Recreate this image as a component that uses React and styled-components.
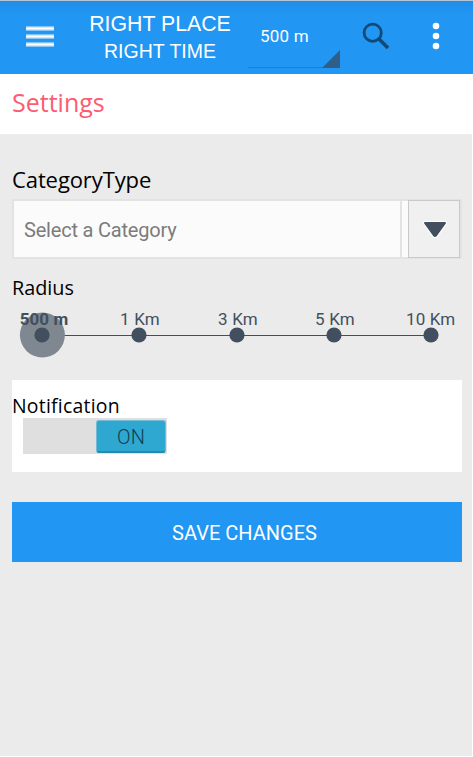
import React from 'react';
import styled, { createGlobalStyle } from 'styled-components';

const GlobalStyle = createGlobalStyle`
  * { box-sizing: border-box; }
  body { margin: 0; background: #fff; }
`;

const Screen = styled.div`
  width: 473px;
  height: 757px;
  background: #fff;
  font-family: Roboto, sans-serif;
  overflow: hidden;
`;

const Header = styled.header`
  display: flex;
  align-items: flex-start;
  height: 74px;
  border-top: 1px solid #b4c5d6;
  background: linear-gradient(#208dea 0, #2196f3 14px);
`;

const MenuIcon = styled.svg`
  flex: none;
  width: 28px;
  height: 22px;
  margin: 25px 0 0 26px;
`;

const Brand = styled.div`
  flex: none;
  width: 142px;
  margin: 10px 0 0 35px;
  color: #fff;
  font-family: 'Liberation Sans', sans-serif;
  text-align: center;
  white-space: nowrap;
`;

const BrandLine = styled.div`
  font-size: ${(p) => p.$size}px;
  line-height: 27px;
`;

const Spinner = styled.div`
  display: flex;
  justify-content: space-between;
  align-items: flex-end;
  flex: none;
  width: 92px;
  height: 50px;
  margin: 17px 0 0 17px;
  border-bottom: 1px solid #2080cc;
`;

const SpinnerValue = styled.span`
  padding-left: 12px;
  color: #fff;
  font-size: 17px;
  line-height: 20px;
  letter-spacing: 0.2px;
  white-space: nowrap;
  align-self: flex-start;
  margin-top: 8px;
`;

const Corner = styled.svg`
  width: 18px;
  height: 18px;
  flex: none;
  margin-bottom: -1px;
`;

const SearchIcon = styled.svg`
  flex: none;
  width: 28px;
  height: 28px;
  margin: 21px 0 0 22px;
`;

const MoreIcon = styled.svg`
  flex: none;
  width: 8px;
  height: 28px;
  margin: 21px 0 0 42px;
`;

const TitleBar = styled.h1`
  height: 60px;
  margin: 0;
  padding-left: 12px;
  color: #fb5c72;
  font: 400 25px/57px 'Open Sans', sans-serif;
`;

const Content = styled.main`
  width: 472px;
  height: 622px;
  padding: 30px 10px 0 12px;
  background: #ebebeb;
`;

const Label = styled.div`
  height: ${(p) => p.$height}px;
  padding-top: ${(p) => p.$top || 0}px;
  color: #000;
  font-family: 'Open Sans', sans-serif;
  font-size: ${(p) => p.$size}px;
  line-height: ${(p) => p.$line || 30}px;
  letter-spacing: ${(p) => p.$spacing || 0}px;
`;

const Select = styled.div`
  display: flex;
  width: 450px;
  height: 60px;
  margin-top: 5px;
  border: 2px solid #e3e3e3;
  background: #fbfbfb;
`;

const SelectText = styled.div`
  width: 388px;
  padding-left: 10px;
  border-right: 2px solid #e3e3e3;
  color: #7c7c7c;
  font-size: 20px;
  line-height: 59px;
  letter-spacing: -0.2px;
`;

const SelectButton = styled.div`
  display: flex;
  justify-content: center;
  align-items: center;
  width: 52px;
  height: 58px;
  margin: -1px 0 0 6px;
  border: 1px solid #c9c9c9;
  background: #f0f0f0;
`;

const Arrow = styled.svg`
  width: 26px;
  height: 20px;
  margin: 1px 0 0 2px;
`;

const Slider = styled.div`
  position: relative;
  height: 60px;
  padding: 9px 0 0 8px;
  color: #424f5e;
`;

const Ticks = styled.div`
  display: grid;
  position: relative;
  grid-template-columns: 101px 98px 97px 94px 50px;
  margin-left: -19px;
  width: 440px;
`;

const Tick = styled.span`
  width: ${(p) => p.$width || 76}px;
  padding-left: ${(p) => p.$inset || 0}px;
  font-size: 17px;
  font-weight: ${(p) => (p.$active ? 700 : 400)};
  line-height: 20px;
  letter-spacing: ${(p) => (p.$active || p.$inset ? 0.1 : 0.2)}px;
  text-align: ${(p) => (p.$inset ? 'left' : 'center')};
  white-space: nowrap;
`;

const Track = styled.svg`
  position: absolute;
  left: 0;
  top: 0;
  width: 450px;
  height: 60px;
`;

const Card = styled.section`
  width: 450px;
  height: 92px;
  margin-top: 20px;
  padding-top: 12px;
  background: #fff;
`;

const Toggle = styled.div`
  display: flex;
  justify-content: flex-end;
  width: 144px;
  height: 36px;
  margin: -1px 0 0 11px;
  padding: 2px 1px 1px;
  background: #dfdfdf;
`;

const Thumb = styled.div`
  width: 70px;
  height: 33px;
  border: 1px solid #71bbd3;
  border-bottom: 2px solid #268caf;
  border-radius: 3px;
  background: #2ea7d1;
  color: #103f50;
  font-size: 20px;
  font-weight: 300;
  line-height: 32px;
  text-align: center;
`;

const SaveButton = styled.button`
  display: block;
  width: 450px;
  height: 60px;
  margin-top: 30px;
  padding: 1px 0 0 15px;
  border: 0;
  background: #2196f3;
  color: #fff;
  font: 400 20px/60px Roboto, sans-serif;
`;

const STOPS = [30, 127, 225, 322, 419];

export default function App() {
  return (
    <Screen>
      <GlobalStyle />
      <Header>
        <MenuIcon viewBox="0 0 28 22">
          {[0, 8, 16].map((y) => (
            <g key={y} fill="#fff">
              <rect y={y} width="28" height="5" opacity="0.45" />
              <rect y={y + 1} width="28" height="3" opacity="0.6" />
              <rect y={y + 2} width="28" height="1" />
            </g>
          ))}
        </MenuIcon>
        <Brand>
          <BrandLine $size={21.3}>RIGHT PLACE</BrandLine>
          <BrandLine $size={19.5}>RIGHT TIME</BrandLine>
        </Brand>
        <Spinner>
          <SpinnerValue>500 m</SpinnerValue>
          <Corner viewBox="0 0 18 18"><path d="M18 0V18H0Z" fill="#2d5f88" /></Corner>
        </Spinner>
        <SearchIcon viewBox="0 0 28 28" fill="none" stroke="#114a78">
          <circle cx="10.7" cy="10.7" r="8.6" strokeWidth="2.8" />
          <path d="M16.8 16.8L26 26" strokeWidth="3.6" />
        </SearchIcon>
        <MoreIcon viewBox="0 0 8 28" fill="#fff">
          <circle cx="4" cy="4" r="3.3" />
          <circle cx="4" cy="14" r="3.3" />
          <circle cx="4" cy="24" r="3.3" />
        </MoreIcon>
      </Header>
      <TitleBar>Settings</TitleBar>
      <Content>
        <Label $size={22} $height={30} $spacing={-0.1}>CategoryType</Label>
        <Select>
          <SelectText>Select a Category</SelectText>
          <SelectButton>
            <Arrow viewBox="0 0 26 20">
              <path d="M3 3H23L14 15.5Q13 16.5 12 15.5Z" fill="#424f5e" stroke="#fff" strokeWidth="4" strokeLinejoin="round" />
              <path d="M3 3H23L14 15.5Q13 16.5 12 15.5Z" fill="#424f5e" stroke="#424f5e" strokeWidth="2" strokeLinejoin="round" />
            </Arrow>
          </SelectButton>
        </Select>
        <Label $size={19.8} $height={41} $top={14}>Radius</Label>
        <Slider>
          <Track viewBox="0 0 450 60">
            <path d="M30 35.5H419" stroke="#424f5e" />
            <circle cx="30.4" cy="35" r="22.5" fill="#7f8890" />
            {STOPS.map((x) => (
              <circle key={x} cx={x} cy="35" r="7.6" fill="#424f5e" />
            ))}
          </Track>
          <Ticks>
            <Tick $active $width={86}>500 m</Tick>
            <Tick>1 Km</Tick>
            <Tick>3 Km</Tick>
            <Tick>5 Km</Tick>
            <Tick $inset={15} $width={66}>10 Km</Tick>
          </Ticks>
        </Slider>
        <Card>
          <Label $size={19.4} $height={27} $line={28} $spacing={0.25}>Notification</Label>
          <Toggle><Thumb>ON</Thumb></Toggle>
        </Card>
        <SaveButton>SAVE CHANGES</SaveButton>
      </Content>
    </Screen>
  );
}
